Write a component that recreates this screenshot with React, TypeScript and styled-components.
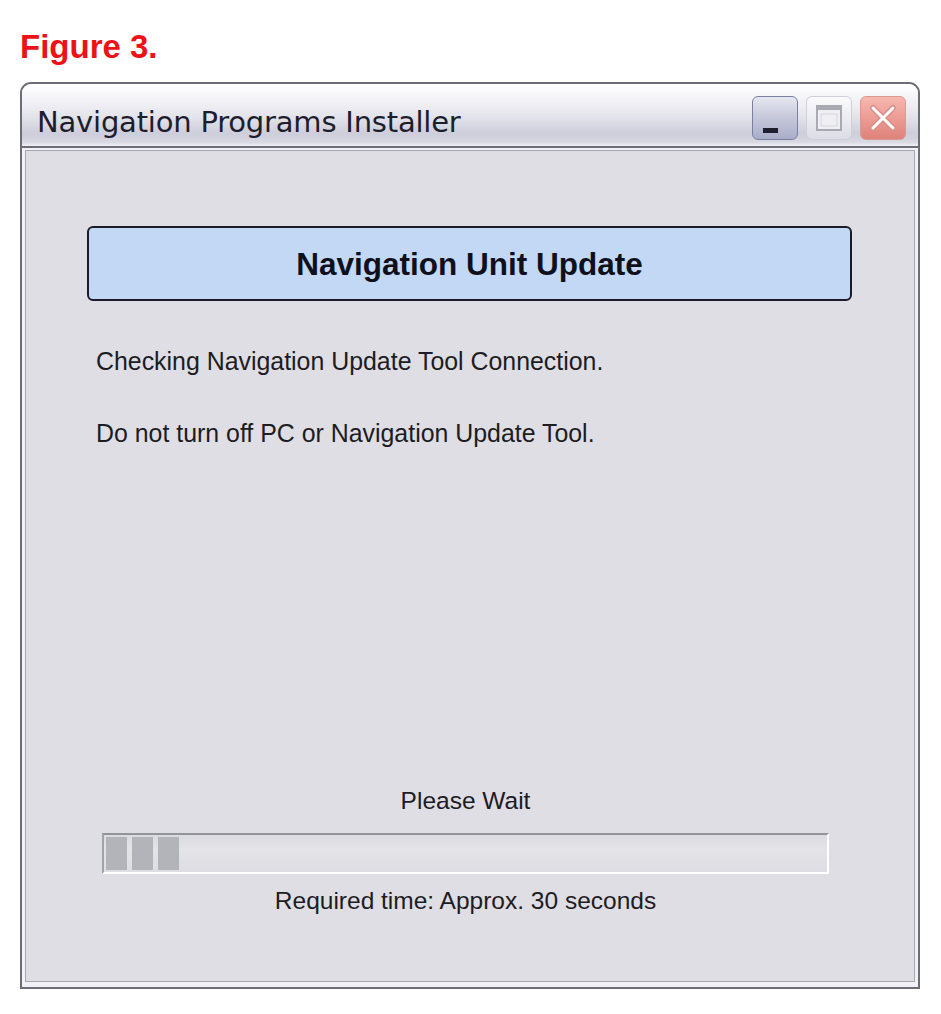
import * as React from "react";
import styled, { createGlobalStyle } from "styled-components";

const GlobalStyle = createGlobalStyle`
  html, body {
    margin: 0;
    padding: 0;
    background: #ffffff;
  }
  body {
    font-family: "Liberation Sans", Arial, sans-serif;
  }
`;

const Page = styled.div`
  width: 941px;
  height: 1014px;
  padding: 0 0 0 20px;
  box-sizing: border-box;
  overflow: hidden;
`;

const Caption = styled.h1`
  margin: 0;
  padding-top: 30px;
  height: 82px;
  box-sizing: border-box;
  font-family: "Liberation Sans", Arial, sans-serif;
  font-size: 33px;
  line-height: 33px;
  font-weight: 700;
  color: #ec1218;
`;

const Window = styled.div`
  width: 900px;
  border: 2px solid #6d6d77;
  border-radius: 11px 11px 0 0;
  background: #f1f1f5;
  box-sizing: border-box;
  overflow: hidden;
`;

const TitleBar = styled.div`
  height: 64px;
  box-sizing: border-box;
  padding: 6px 12px 0 15px;
  display: flex;
  align-items: center;
  justify-content: space-between;
  border-bottom: 2px solid #6d6d77;
  background: linear-gradient(
    to bottom,
    #ffffff 0%,
    #f3f3f7 25%,
    #e2e2ea 55%,
    #cdcddb 80%,
    #d9d9e4 94%,
    #f0f0f5 100%
  );
`;

const Title = styled.div`
  font-family: "DejaVu Sans", Tahoma, sans-serif;
  font-size: 29px;
  color: #1d1d2b;
  margin-top: 8px;
  letter-spacing: -0.2px;
`;

const Controls = styled.div`
  display: flex;
  gap: 8px;
`;

const CtlButton = styled.div<{ $kind: "min" | "max" | "close" }>`
  position: relative;
  width: 46px;
  height: 44px;
  box-sizing: border-box;
  border-radius: 6px;
  display: flex;
  align-items: center;
  justify-content: center;
  border: 1px solid
    ${(p) =>
      p.$kind === "min" ? "#7b80a0" : p.$kind === "max" ? "#cfcfd8" : "#d99a92"};
  background: ${(p) =>
    p.$kind === "min"
      ? "linear-gradient(to bottom, #e6e7f0 0%, #c8cadc 45%, #a9adc8 100%)"
      : p.$kind === "max"
      ? "linear-gradient(to bottom, #fbfbfd 0%, #ececf2 50%, #dcdce6 100%)"
      : "linear-gradient(to bottom, #f6b8b0 0%, #ec9c94 50%, #de827a 100%)"};
`;

const MinBar = styled.div`
  position: absolute;
  left: 10px;
  bottom: 6px;
  width: 15px;
  height: 5px;
  background: #1e1e2e;
`;

const Body = styled.div`
  padding: 2px 3px 5px 3px;
`;

const Client = styled.div`
  height: 832px;
  box-sizing: border-box;
  border: 1px solid #a6a6b0;
  background: #dfdee4;
  padding: 75px 62px 68px 61px;
  display: flex;
  flex-direction: column;
`;

const Banner = styled.div`
  height: 75px;
  box-sizing: border-box;
  border: 2px solid #1b1b29;
  border-radius: 6px;
  background: #c2d8f4;
  display: flex;
  align-items: center;
  justify-content: center;
  font-family: "Liberation Sans", Arial, sans-serif;
  font-weight: 700;
  font-size: 31.5px;
  color: #10101c;
  padding-top: 1px;
`;

const Messages = styled.div`
  margin: 48px 0 0 9px;
  display: flex;
  flex-direction: column;
  gap: 48px;
`;

const Line = styled.div`
  font-size: 24.9px;
  line-height: 24px;
  color: #1c1c22;
`;

const Spacer = styled.div`
  flex: 1;
`;

const Progress = styled.div`
  padding: 0 23px 0 15px;
  display: flex;
  flex-direction: column;
  align-items: stretch;
`;

const Centered = styled.div`
  text-align: center;
  font-size: 24.5px;
  line-height: 24px;
  color: #1c1c22;
`;

const Track = styled.div`
  margin: 20px 0 15px;
  height: 41px;
  box-sizing: border-box;
  border-top: 2px solid #93939b;
  border-left: 2px solid #a2a2aa;
  border-bottom: 2px solid #ffffff;
  border-right: 2px solid #ffffff;
  background: linear-gradient(
    to bottom,
    #dcdbe1 0%,
    #e4e3e8 40%,
    #dedde3 100%
  );
  padding: 2px 2px 2px 2px;
  display: flex;
  gap: 5px;
`;

const Chunk = styled.div`
  width: 21px;
  height: 100%;
  background: #b3b3ba;
`;

const chunks = [0, 1, 2];

export default function App() {
  return (
    <>
      <GlobalStyle />
      <Page>
        <Caption>Figure 3.</Caption>
        <Window>
          <TitleBar>
            <Title>Navigation Programs Installer</Title>
            <Controls>
              <CtlButton $kind="min">
                <MinBar />
              </CtlButton>
              <CtlButton $kind="max">
                <svg width="28" height="28" viewBox="0 0 28 28">
                  <rect
                    x="2"
                    y="2"
                    width="24"
                    height="24"
                    fill="#eeeef3"
                    stroke="#a9a9b2"
                    strokeWidth="2"
                  />
                  <rect x="2" y="2" width="24" height="4" fill="#a9a9b2" />
                  <rect
                    x="6"
                    y="10"
                    width="16"
                    height="12"
                    fill="none"
                    stroke="#d6d6de"
                    strokeWidth="1"
                  />
                </svg>
              </CtlButton>
              <CtlButton $kind="close">
                <svg width="30" height="30" viewBox="0 0 30 30">
                  <path
                    d="M5 5 L25 25 M25 5 L5 25"
                    stroke="#d98e86"
                    strokeWidth="6"
                    strokeLinecap="round"
                  />
                  <path
                    d="M5 5 L25 25 M25 5 L5 25"
                    stroke="#ffffff"
                    strokeWidth="3"
                    strokeLinecap="round"
                  />
                </svg>
              </CtlButton>
            </Controls>
          </TitleBar>
          <Body>
            <Client>
              <Banner>Navigation Unit Update</Banner>
              <Messages>
                <Line>Checking Navigation Update Tool Connection.</Line>
                <Line>Do not turn off PC or Navigation Update Tool.</Line>
              </Messages>
              <Spacer />
              <Progress>
                <Centered>Please Wait</Centered>
                <Track>
                  {chunks.map((c) => (
                    <Chunk key={c} />
                  ))}
                </Track>
                <Centered>Required time: Approx. 30 seconds</Centered>
              </Progress>
            </Client>
          </Body>
        </Window>
      </Page>
    </>
  );
}
